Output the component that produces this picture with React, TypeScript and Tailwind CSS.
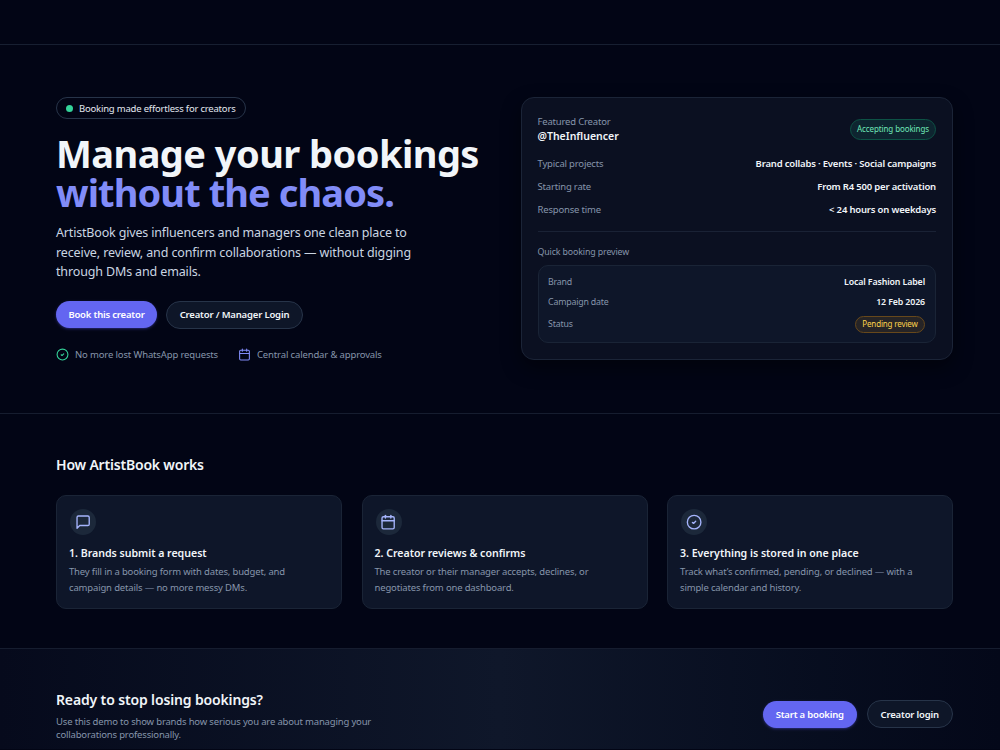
import { Calendar } from "lucide-react";
import type { ReactNode } from "react";

const projectRows = [
  { label: "Typical projects", value: "Brand collabs · Events · Social campaigns" },
  { label: "Starting rate", value: "From R4 500 per activation" },
  { label: "Response time", value: "< 24 hours on weekdays" },
];

const MessageIcon = () => (
  <svg
    className="h-[16.25px] w-[16.25px]"
    viewBox="0 0 24 24"
    fill="none"
    stroke="currentColor"
    strokeWidth="2"
    strokeLinecap="round"
    strokeLinejoin="round"
  >
    <path d="M21 15a2 2 0 0 1-2 2H7l-4 4V5a2 2 0 0 1 2-2h14a2 2 0 0 1 2 2z" />
  </svg>
);

const CheckIcon = ({ className }: { className: string }) => (
  <svg
    className={className}
    viewBox="0 0 24 24"
    fill="none"
    stroke="currentColor"
    strokeWidth="2"
    strokeLinecap="round"
    strokeLinejoin="round"
  >
    <circle cx="12" cy="12" r="10" />
    <path d="m9.5 12.5 1.6 1.4 3.2-3.2" />
  </svg>
);

const steps = [
  {
    icon: <MessageIcon />,
    title: "1. Brands submit a request",
    lines: ["They fill in a booking form with dates, budget, and", "campaign details — no more messy DMs."],
  },
  {
    icon: <Calendar className="h-[16.25px] w-[16.25px]" />,
    title: "2. Creator reviews & confirms",
    lines: ["The creator or their manager accepts, declines, or", "negotiates from one dashboard."],
  },
  {
    icon: <CheckIcon className="h-[16.25px] w-[16.25px]" />,
    title: "3. Everything is stored in one place",
    lines: ["Track what’s confirmed, pending, or declined — with a", "simple calendar and history."],
  },
];

const PrimaryButton = ({ className, children }: { className: string; children: ReactNode }) => (
  <button
    className={`h-[27px] rounded-full bg-[#6366f1] pt-[2px] text-[9.5px] font-semibold tracking-[-0.19px] whitespace-nowrap text-white shadow-sm shadow-indigo-500/30 ${className}`}
  >
    {children}
  </button>
);

const OutlineButton = ({ className, children }: { className: string; children: ReactNode }) => (
  <button
    className={`h-7 rounded-full border border-[#273449] bg-[#0e1628] pt-[2px] text-[9.5px] font-semibold tracking-[-0.17px] whitespace-nowrap text-slate-100 ${className}`}
  >
    {children}
  </button>
);

const Hero = () => (
  <section className="h-[369px] border-b border-[#161d2f] px-14 pt-[52px]">
    <div className="grid grid-cols-[432px_432px] gap-[33px]">
      {/* Left: pitch */}
      <div className="whitespace-nowrap">
        <div className="flex h-[22px] w-[190px] items-center gap-[6px] rounded-full border border-[#273449] pl-[9px] text-[9.5px] tracking-[-0.2px] text-slate-200">
          <span className="h-[7px] w-[7px] rounded-full bg-[#34d399]" />
          <span className="pt-[2px]">Booking made effortless for creators</span>
        </div>
        <h1 className="mt-[15px] text-[38px] leading-[39px] font-bold text-slate-100">
          <span className="block tracking-[-0.55px]">Manage your bookings</span>
          <span className="block tracking-[-0.9px] text-[#818cf8]">without the chaos.</span>
        </h1>
        <p className="mt-[11px] text-[12.5px] leading-[19.5px] tracking-[-0.14px] text-slate-300">
          <span className="tracking-[-0.17px]">ArtistBook gives influencers and managers one clean place to</span>
          <br />
          <span className="tracking-[-0.12px]">receive, review, and confirm collaborations — without digging</span>
          <br />
          through DMs and emails.
        </p>
        <div className="mt-[19px] flex items-center gap-[9px]">
          <PrimaryButton className="w-[101px]">Book this creator</PrimaryButton>
          <OutlineButton className="w-[137px]">Creator / Manager Login</OutlineButton>
        </div>
        <div className="mt-[19px] flex items-center text-[9.5px] leading-[13px] tracking-[-0.14px] text-[#8695ab]">
          <CheckIcon className="mr-[6px] h-[13px] w-[13px] text-[#34d399]" />
          <span className="w-[143px]">No more lost WhatsApp requests</span>
          <Calendar className="mr-[6px] ml-5 h-[13px] w-[13px] text-[#818cf8]" />
          <span>Central calendar &amp; approvals</span>
        </div>
      </div>

      {/* Right: featured creator card */}
      <div className="h-[263px] rounded-[13px] border border-[#1b2437] bg-[#0b1021] pt-[17px] pr-4 pl-[15.5px] text-[9.5px] tracking-[-0.18px] whitespace-nowrap text-[#8695ab] shadow-[0_8px_20px_rgba(0,0,0,0.45)]">
        <div className="flex items-center justify-between">
          <div>
            <div className="leading-[14px]">Featured Creator</div>
            <div className="text-[10.5px] leading-[14px] font-semibold tracking-normal text-slate-100">@TheInfluencer</div>
          </div>
          <span className="flex h-[21px] w-[86px] items-center justify-center rounded-full border border-[#0d5245] bg-[#0e2530] text-[8px] tracking-[-0.1px] text-[#6ee7b7]">
            Accepting bookings
          </span>
        </div>
        <div className="mt-[10px]">
          {projectRows.map((row) => (
            <div key={row.label} className="flex h-[22.75px] items-center justify-between">
              <span>{row.label}</span>
              <span className="font-semibold text-slate-100">{row.value}</span>
            </div>
          ))}
        </div>
        <div className="mt-[10px] border-t border-[#1a2235] pt-[14px]">
          <div className="text-[8.8px] leading-[13px] tracking-[-0.12px]">Quick booking preview</div>
          <div className="mt-[6px] h-[78px] rounded-[10px] border border-[#1a2436] bg-[#0e1629] pr-[10px] pl-[9.5px] pt-[6px] text-[8.8px]">
            <div className="flex h-5 items-center justify-between">
              <span>Brand</span>
              <span className="font-semibold tracking-[-0.12px] text-slate-100">Local Fashion Label</span>
            </div>
            <div className="flex h-5 items-center justify-between">
              <span>Campaign date</span>
              <span className="font-semibold tracking-[-0.12px] text-slate-100">12 Feb 2026</span>
            </div>
            <div className="flex h-6 items-center justify-between">
              <span>Status</span>
              <span className="flex h-[17px] w-[70px] items-center justify-center rounded-full border border-[#67481b] bg-[#262426] text-[8px] tracking-[-0.15px] text-[#fcd34d]">
                Pending review
              </span>
            </div>
          </div>
        </div>
      </div>
    </div>
  </section>
);

const HowItWorks = () => (
  <section className="h-[235px] border-b border-[#161d2f] px-14 pt-[39px]">
    <h2 className="text-[14px] leading-[23px] font-semibold tracking-[-0.2px] text-slate-100">How ArtistBook works</h2>
    <div className="mt-[19px] grid w-[897px] grid-cols-3 gap-[19.5px]">
      {steps.map((step) => (
        <div key={step.title} className="h-[114px] rounded-[10px] border border-[#1a2436] bg-[#0e1629] px-3 pt-[13px] whitespace-nowrap">
          <div className="ml-px flex h-[26px] w-[26px] items-center justify-center rounded-full bg-[#1c283a] text-[#a5b4fc]">
            {step.icon}
          </div>
          <h3 className="mt-[10px] text-[10.6px] leading-4 font-semibold tracking-[-0.02px] text-slate-100">{step.title}</h3>
          <p className="mt-[3px] text-[9.5px] leading-4 tracking-[-0.16px] text-[#8695ab]">
            {step.lines[0]}
            <br />
            {step.lines[1]}
          </p>
        </div>
      ))}
    </div>
  </section>
);

const CallToAction = () => (
  <section className="flex h-[100px] items-start justify-between bg-linear-to-r from-[#060a1c] via-[#0f172a] to-[#040819] pr-[47px] pl-14 whitespace-nowrap">
    <div className="pt-[39px]">
      <h2 className="text-[14px] leading-[23px] font-semibold tracking-[-0.14px] text-slate-100">
        Ready to stop losing bookings?
      </h2>
      <p className="mt-[4px] text-[9.5px] leading-[13px] tracking-[-0.17px] text-[#8695ab]">
        Use this demo to show brands how serious you are about managing your
        <br />
        collaborations professionally.
      </p>
    </div>
    <div className="flex items-center gap-[9.5px] pt-[51px]">
      <PrimaryButton className="w-[94.5px]">Start a booking</PrimaryButton>
      <OutlineButton className="w-[86.5px]">Creator login</OutlineButton>
    </div>
  </section>
);

export default function App() {
  return (
    <div className="h-[750px] overflow-hidden bg-[#020515] font-['Noto_Sans','Open_Sans',sans-serif] text-slate-100">
      <header className="h-[45px] border-b border-[#171f31]" />
      <Hero />
      <HowItWorks />
      <CallToAction />
    </div>
  );
}
